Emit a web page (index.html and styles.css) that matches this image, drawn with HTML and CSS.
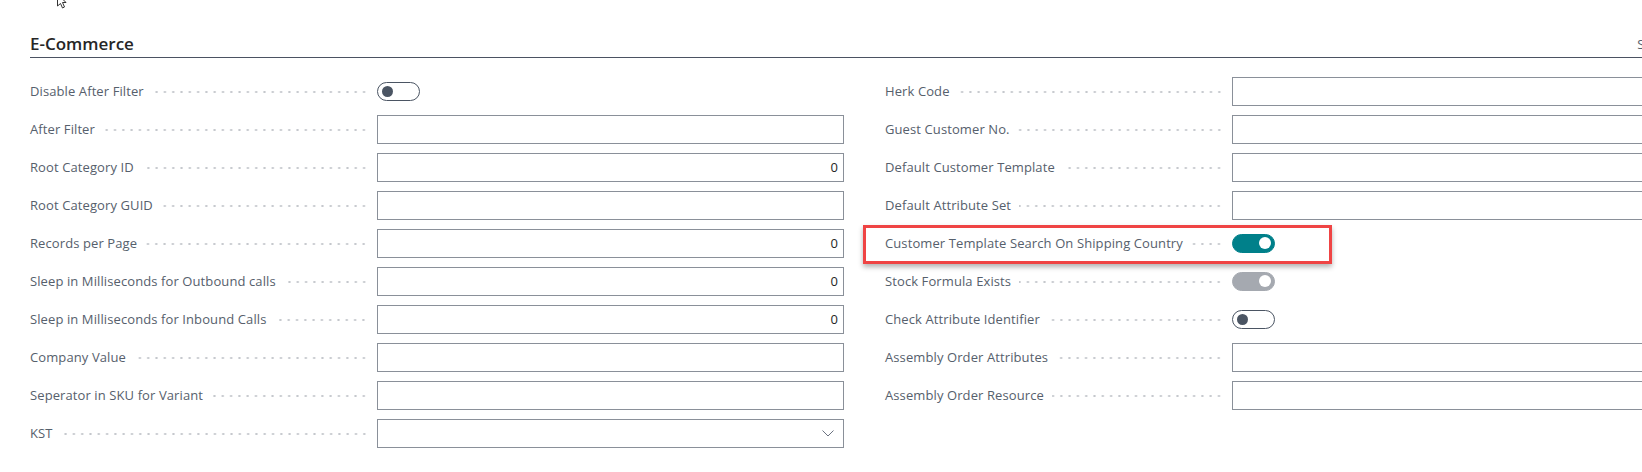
FILE: index.html
```html
<!DOCTYPE html>
<html lang="en">
<head>
  <meta charset="UTF-8">
  <title>E-Commerce Setup</title>
  <link rel="stylesheet" href="styles.css">
</head>
<body>
  <svg class="cursor" width="14" height="10" viewBox="0 0 14 10">
    <path d="M1.5 -6 L1.5 6 L4.5 3.5 L6.5 8 L8.5 7 L6.5 2.5 L10 2.5 Z" fill="#fff" stroke="#333" stroke-width="1"/>
  </svg>

  <div class="section">
    <div class="section-header">
      <h2 class="section-title">E-Commerce</h2>
      <span class="show-more">Show more</span>
    </div>

    <div class="fields">
      <div class="column">
        <div class="row">
          <div class="label"><span class="label-text">Disable After Filter</span><span class="leader"></span></div>
          <div class="value"><span class="toggle"><span class="knob"></span></span></div>
        </div>
        <div class="row">
          <div class="label"><span class="label-text">After Filter</span><span class="leader"></span></div>
          <div class="value"><div class="input"></div></div>
        </div>
        <div class="row">
          <div class="label"><span class="label-text">Root Category ID</span><span class="leader"></span></div>
          <div class="value"><div class="input number">0</div></div>
        </div>
        <div class="row">
          <div class="label"><span class="label-text">Root Category GUID</span><span class="leader"></span></div>
          <div class="value"><div class="input"></div></div>
        </div>
        <div class="row">
          <div class="label"><span class="label-text">Records per Page</span><span class="leader"></span></div>
          <div class="value"><div class="input number">0</div></div>
        </div>
        <div class="row">
          <div class="label"><span class="label-text">Sleep in Milliseconds for Outbound calls</span><span class="leader"></span></div>
          <div class="value"><div class="input number">0</div></div>
        </div>
        <div class="row">
          <div class="label"><span class="label-text">Sleep in Milliseconds for Inbound Calls</span><span class="leader"></span></div>
          <div class="value"><div class="input number">0</div></div>
        </div>
        <div class="row">
          <div class="label"><span class="label-text">Company Value</span><span class="leader"></span></div>
          <div class="value"><div class="input"></div></div>
        </div>
        <div class="row">
          <div class="label"><span class="label-text">Seperator in SKU for Variant</span><span class="leader"></span></div>
          <div class="value"><div class="input"></div></div>
        </div>
        <div class="row">
          <div class="label"><span class="label-text">KST</span><span class="leader"></span></div>
          <div class="value">
            <div class="input select">
              <svg class="chevron" width="12" height="7" viewBox="0 0 12 7"><path d="M0.5 0.5 L6 6 L11.5 0.5" fill="none" stroke="#6b7280" stroke-width="1"/></svg>
            </div>
          </div>
        </div>
      </div>

      <div class="column">
        <div class="row">
          <div class="label"><span class="label-text">Herk Code</span><span class="leader"></span></div>
          <div class="value"><div class="input"></div></div>
        </div>
        <div class="row">
          <div class="label"><span class="label-text">Guest Customer No.</span><span class="leader"></span></div>
          <div class="value"><div class="input"></div></div>
        </div>
        <div class="row">
          <div class="label"><span class="label-text">Default Customer Template</span><span class="leader"></span></div>
          <div class="value"><div class="input"></div></div>
        </div>
        <div class="row">
          <div class="label"><span class="label-text">Default Attribute Set</span><span class="leader"></span></div>
          <div class="value"><div class="input"></div></div>
        </div>
        <div class="row highlighted">
          <span class="highlight"></span>
          <div class="label"><span class="label-text">Customer Template Search On Shipping Country</span><span class="leader"></span></div>
          <div class="value"><span class="toggle on"><span class="knob"></span></span></div>
        </div>
        <div class="row">
          <div class="label"><span class="label-text">Stock Formula Exists</span><span class="leader"></span></div>
          <div class="value"><span class="toggle on disabled"><span class="knob"></span></span></div>
        </div>
        <div class="row">
          <div class="label"><span class="label-text">Check Attribute Identifier</span><span class="leader"></span></div>
          <div class="value"><span class="toggle"><span class="knob"></span></span></div>
        </div>
        <div class="row">
          <div class="label"><span class="label-text">Assembly Order Attributes</span><span class="leader"></span></div>
          <div class="value"><div class="input"></div></div>
        </div>
        <div class="row">
          <div class="label"><span class="label-text">Assembly Order Resource</span><span class="leader"></span></div>
          <div class="value"><div class="input"></div></div>
        </div>
      </div>
    </div>
  </div>
</body>
</html>
```

FILE: styles.css
```css
body {
  margin: 0;
  background-color: #fff;
  font-family: "Open Sans", "Noto Sans", Arial, sans-serif;
  color: #56606c;
  overflow: hidden;
  position: relative;
}
.cursor {
  position: absolute;
  left: 56px;
  top: 0;
}
.section {
  width: 1676px;
  padding-left: 30px;
}
.section-header {
  display: flex;
  justify-content: space-between;
  align-items: flex-end;
  padding-top: 31px;
  border-bottom: 1px solid #4b5262;
}
.section-title {
  margin: 0;
  font-size: 17px;
  font-weight: 600;
  line-height: 26px;
  color: #262626;
}
.show-more {
  font-size: 13px;
  line-height: 26px;
  color: #56606c;
}
.fields {
  display: grid;
  grid-template-columns: 814px 814px;
  column-gap: 41px;
  margin-top: 14px;
}
.column {
  display: flex;
  flex-direction: column;
}
.row {
  display: grid;
  grid-template-columns: 347px 467px;
  align-items: center;
  height: 38px;
  font-size: 13px;
}
.label {
  display: flex;
  align-items: center;
  min-width: 0;
}
.label-text {
  white-space: nowrap;
  letter-spacing: 0.1px;
}
.leader {
  flex: 1;
  height: 4px;
  margin: 2px 9px 0 8px;
  background-image: radial-gradient(circle, #c4c7cc 0.9px, transparent 1.3px);
  background-size: 8.3px 4px;
  background-repeat: repeat-x;
  background-position: right center;
}
.value {
  display: flex;
  align-items: center;
}
.input {
  box-sizing: border-box;
  width: 100%;
  height: 29px;
  border: 1px solid #8a9099;
  padding: 0 5px;
  line-height: 27px;
  color: #262626;
}
.input.number {
  text-align: right;
}
.input.select {
  display: flex;
  justify-content: flex-end;
  align-items: center;
  padding-right: 9px;
}
.toggle {
  box-sizing: border-box;
  display: flex;
  align-items: center;
  width: 43px;
  height: 19px;
  padding: 0 4px;
  border: 1px solid #4b5563;
  border-radius: 10px;
}
.knob {
  width: 11px;
  height: 11px;
  border-radius: 50%;
  background-color: #4b5563;
}
.toggle.on {
  justify-content: flex-end;
  background-color: #00808a;
  border-color: #00808a;
  padding: 0 3px;
}
.toggle.on .knob {
  width: 12px;
  height: 12px;
  background-color: #fff;
}
.toggle.disabled {
  background-color: #a5a9b0;
  border-color: #a5a9b0;
}
.highlighted {
  position: relative;
}
.highlight {
  position: absolute;
  left: -22px;
  top: 1px;
  width: 469px;
  height: 39px;
  box-sizing: border-box;
  border: 3px solid #ef4444;
  box-shadow: 0 3px 5px rgba(0, 0, 0, 0.3);
}
```
